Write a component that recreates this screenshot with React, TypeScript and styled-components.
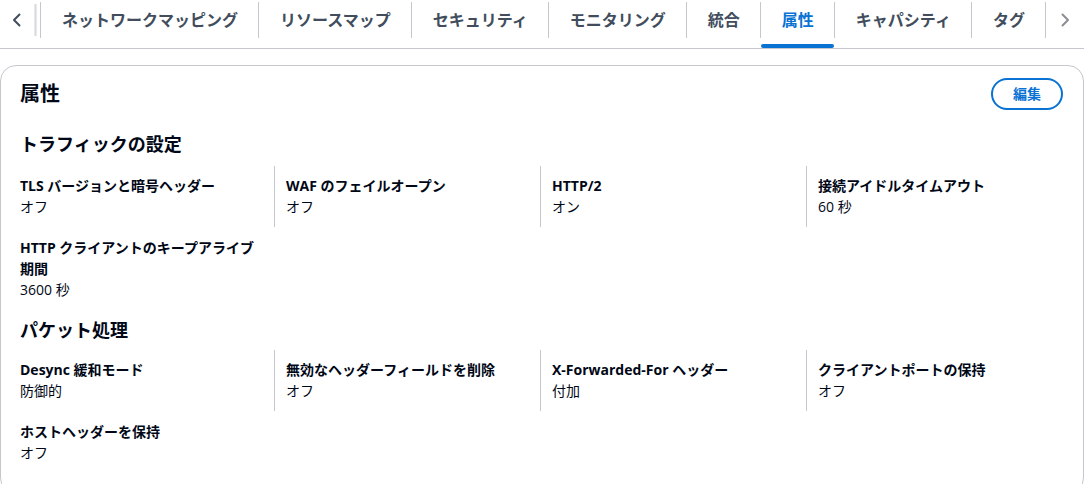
import styled, { createGlobalStyle } from 'styled-components';

const GlobalStyle = createGlobalStyle`
  html, body {
    margin: 0;
    padding: 0;
    background: #ffffff;
  }
  body {
    font-family: "Open Sans", "Noto Sans CJK JP", sans-serif;
    color: #000716;
    -webkit-font-smoothing: antialiased;
  }
`;

interface Pair {
  label: string;
  value: string;
}

const tabs = [
  'ネットワークマッピング',
  'リソースマップ',
  'セキュリティ',
  'モニタリング',
  '統合',
  '属性',
  'キャパシティ',
  'タグ',
];

const ACTIVE_TAB = '属性';

// 列ごとに並べる (1列目だけ2項目)
const trafficColumns: Pair[][] = [
  [
    { label: 'TLS バージョンと暗号ヘッダー', value: 'オフ' },
    { label: 'HTTP クライアントのキープアライブ期間', value: '3600 秒' },
  ],
  [{ label: 'WAF のフェイルオープン', value: 'オフ' }],
  [{ label: 'HTTP/2', value: 'オン' }],
  [{ label: '接続アイドルタイムアウト', value: '60 秒' }],
];

const packetColumns: Pair[][] = [
  [
    { label: 'Desync 緩和モード', value: '防御的' },
    { label: 'ホストヘッダーを保持', value: 'オフ' },
  ],
  [{ label: '無効なヘッダーフィールドを削除', value: 'オフ' }],
  [{ label: 'X-Forwarded-For ヘッダー', value: '付加' }],
  [{ label: 'クライアントポートの保持', value: 'オフ' }],
];

function Chevron({ dir }: { dir: 'left' | 'right' }) {
  return (
    <svg width="16" height="16" viewBox="0 0 16 16" fill="none">
      <path
        d={dir === 'left' ? 'M10.5 2.5 5 8l5.5 5.5' : 'M5.5 2.5 11 8l-5.5 5.5'}
        stroke="currentColor"
        strokeWidth="2"
        strokeLinecap="round"
        strokeLinejoin="round"
      />
    </svg>
  );
}

function KeyValueGrid({ columns }: { columns: Pair[][] }) {
  return (
    <Grid>
      {columns.map((col, i) => (
        <Column key={i} $first={i === 0}>
          {col.map((pair) => (
            <PairBox key={pair.label}>
              <Label>{pair.label}</Label>
              <Value>{pair.value}</Value>
            </PairBox>
          ))}
        </Column>
      ))}
    </Grid>
  );
}

export default function App() {
  return (
    <>
      <GlobalStyle />
      <Page>
        <TabBar>
          <ScrollButton $muted={false} $width={34}>
            <Chevron dir="left" />
          </ScrollButton>
          <Fade />
          <TabList>
            {tabs.map((tab) => (
              <Tab key={tab}>
                <TabLabel $active={tab === ACTIVE_TAB}>{tab}</TabLabel>
                <Underline $active={tab === ACTIVE_TAB} />
              </Tab>
            ))}
            <TabEnd />
          </TabList>
          <ScrollButton $muted $width={38}>
            <Chevron dir="right" />
          </ScrollButton>
        </TabBar>

        <Container>
          <HeaderRow>
            <Title>属性</Title>
            <EditButton>編集</EditButton>
          </HeaderRow>

          <SectionTitle $top={23} $bottom={11}>
            トラフィックの設定
          </SectionTitle>
          <KeyValueGrid columns={trafficColumns} />

          <SectionTitle $top={9} $bottom={9}>
            パケット処理
          </SectionTitle>
          <KeyValueGrid columns={packetColumns} />
        </Container>
      </Page>
    </>
  );
}

const Page = styled.div`
  width: 1084px;
`;

const TabBar = styled.div`
  display: flex;
  align-items: flex-start;
  height: 48px;
  border-bottom: 1px solid #c6c6cd;
`;

const ScrollButton = styled.div<{ $muted: boolean; $width: number }>`
  display: flex;
  align-items: center;
  justify-content: center;
  width: ${({ $width }) => $width}px;
  height: 36px;
  margin-top: 2px;
  color: ${({ $muted }) => ($muted ? '#8c8c94' : '#414d5c')};
  flex-shrink: 0;
`;

const Fade = styled.div`
  width: 3px;
  height: 32px;
  margin: 4px 3px 0 0;
  background: linear-gradient(to right, #f0f0f2, #d9d9de, #f0f0f2);
  flex-shrink: 0;
`;

const TabList = styled.div`
  display: flex;
  align-items: flex-start;
`;

const Tab = styled.div`
  display: flex;
  flex-direction: column;
  padding-top: 2px;
`;

const TabLabel = styled.div<{ $active: boolean }>`
  height: 36px;
  line-height: 36px;
  padding: 0 20px 0 21px;
  border-left: 1px solid #c6c6cd;
  font-size: 16px;
  font-weight: 700;
  white-space: nowrap;
  color: ${({ $active }) => ($active ? '#0972d3' : '#414d5c')};
`;

const Underline = styled.div<{ $active: boolean }>`
  height: 4px;
  margin: 6px 0 0 1px;
  border-radius: 2px;
  background: ${({ $active }) => ($active ? '#0972d3' : 'transparent')};
`;

const TabEnd = styled.div`
  width: 1px;
  height: 36px;
  margin-top: 2px;
  background: #c6c6cd;
`;

const Container = styled.div`
  margin-top: 16px;
  padding: 12px 20px 20px 19px;
  border: 1px solid #c6c6cd;
  border-radius: 16px;
  background: #ffffff;
`;

const HeaderRow = styled.div`
  display: flex;
  align-items: center;
  justify-content: space-between;
  height: 32px;
`;

const Title = styled.h2`
  margin: 0;
  font-size: 20px;
  line-height: 24px;
  font-weight: 700;
  color: #000716;
`;

const EditButton = styled.button`
  height: 32px;
  padding: 0 20px;
  border: 2px solid #0972d3;
  border-radius: 20px;
  background: #ffffff;
  color: #0972d3;
  font-family: inherit;
  font-size: 14px;
  font-weight: 700;
  line-height: 20px;
  cursor: pointer;
`;

const SectionTitle = styled.h3<{ $top: number; $bottom: number }>`
  margin: ${({ $top, $bottom }) => `${$top}px 0 ${$bottom}px`};
  font-size: 18px;
  line-height: 22px;
  font-weight: 700;
  color: #000716;
`;

const Grid = styled.div`
  display: grid;
  grid-template-columns: repeat(4, 266px);
  align-items: start;
  margin-left: -12px;
`;

const Column = styled.div<{ $first: boolean }>`
  display: flex;
  flex-direction: column;
  gap: 19px;
  padding: 9px 10px 9px 11px;
  border-left: 1px solid ${({ $first }) => ($first ? 'transparent' : '#c6c6cd')};
`;

const PairBox = styled.div`
  display: flex;
  flex-direction: column;
`;

const Label = styled.div`
  font-size: 14px;
  line-height: 21px;
  font-weight: 700;
  color: #000716;
`;

const Value = styled.div`
  font-size: 14px;
  line-height: 22px;
  color: #000716;
`;
